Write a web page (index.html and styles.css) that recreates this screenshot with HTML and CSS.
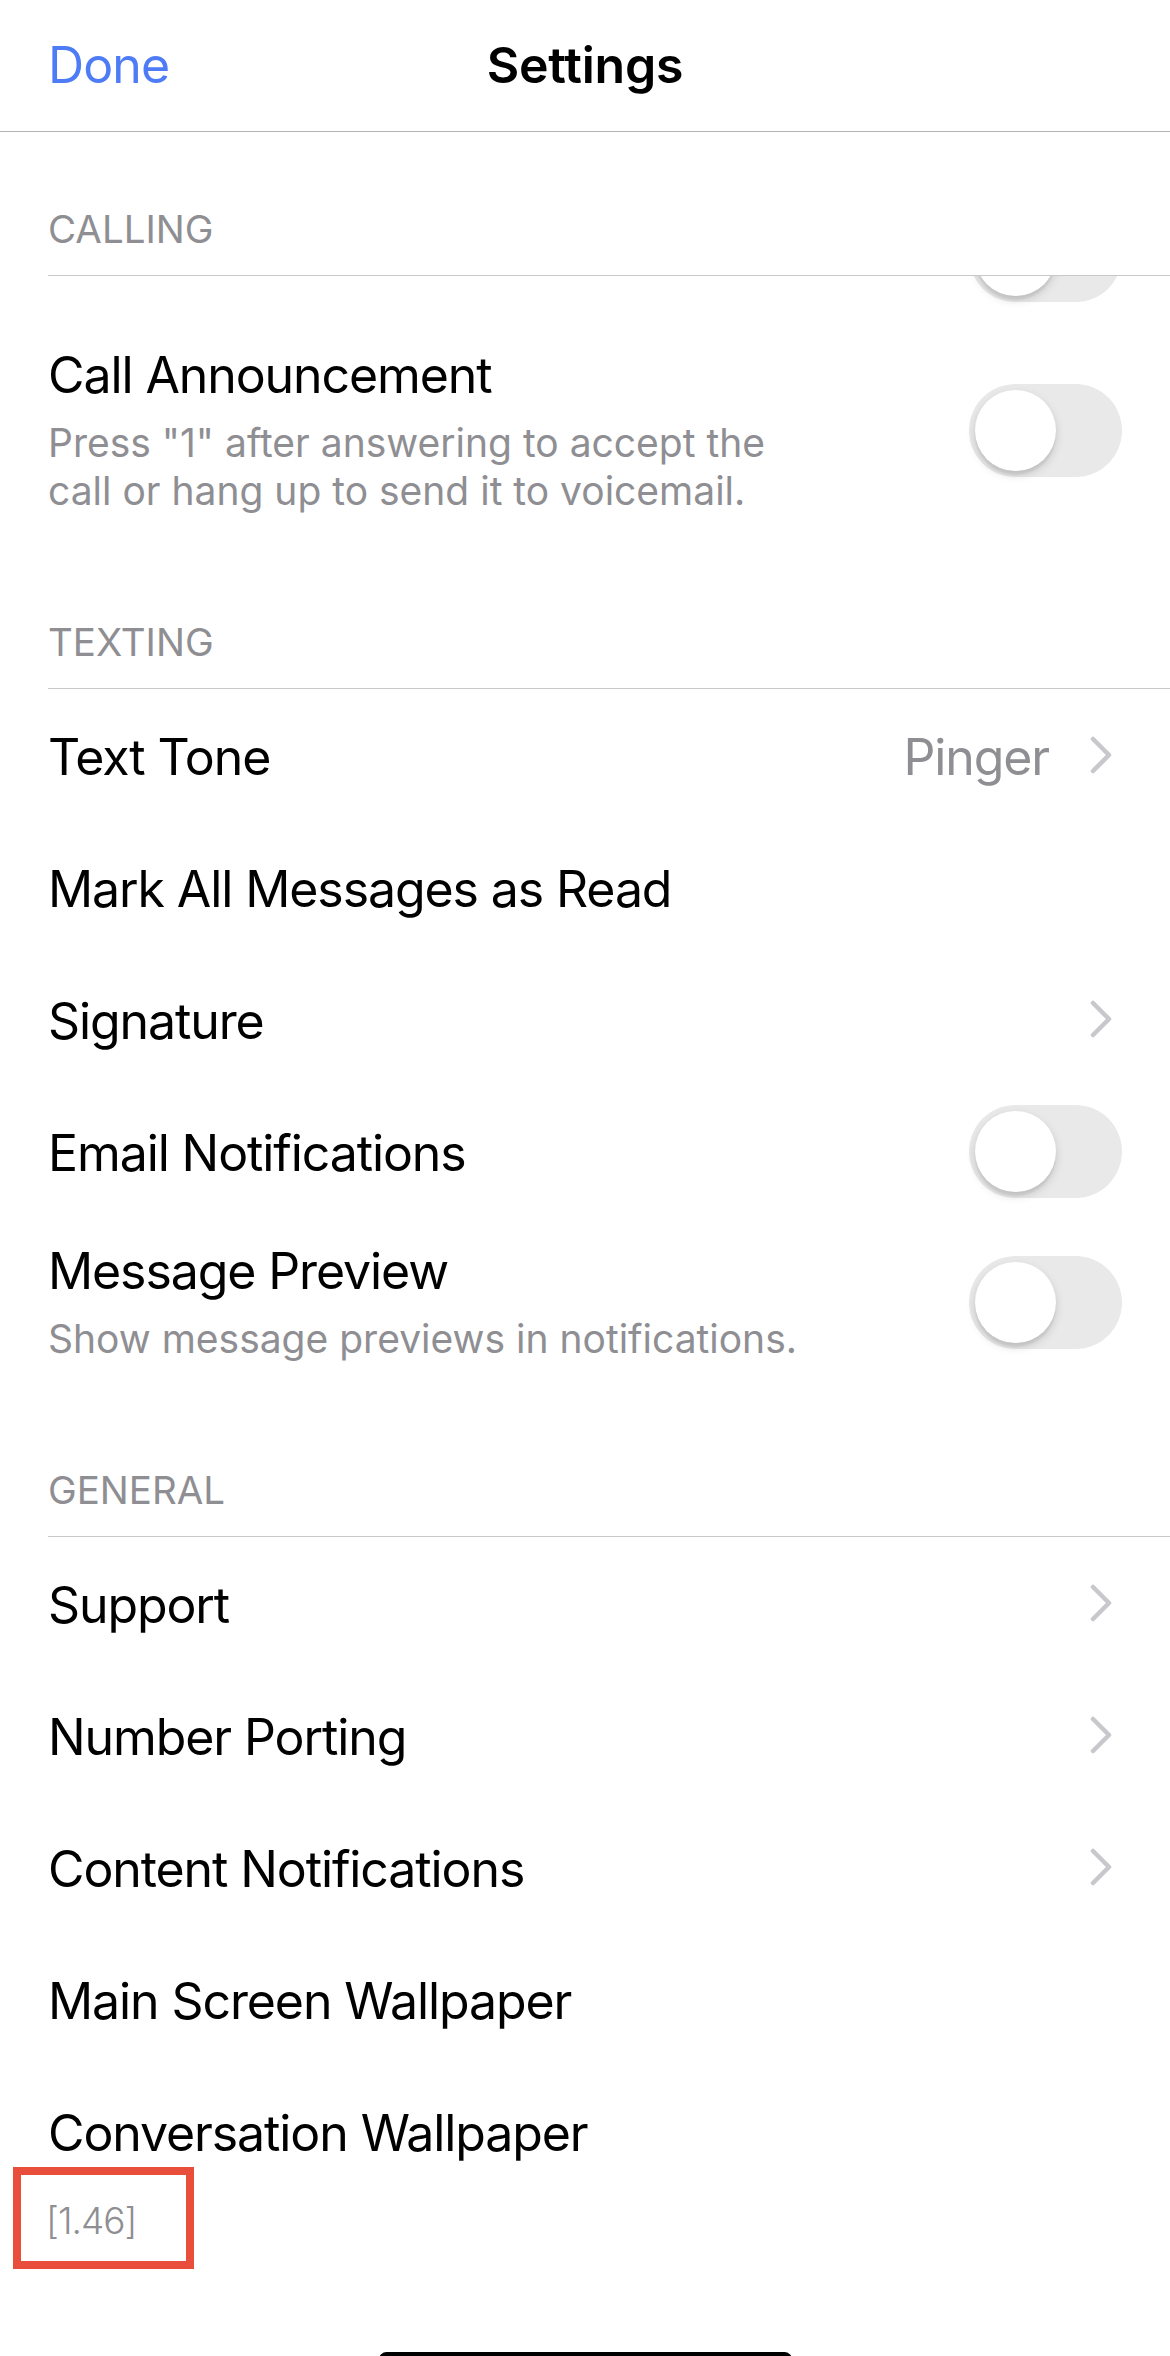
FILE: index.html
```html
<!DOCTYPE html>
<html lang="en">
<head>
<meta charset="utf-8">
<title>Settings</title>
<link rel="stylesheet" href="styles.css">
</head>
<body>
<header class="nav">
  <span class="nav-done">Done</span>
  <span class="nav-title">Settings</span>
  <span class="nav-spacer"></span>
</header>

<div class="section-head section-head--first">CALLING</div>
<div class="peek-row">
  <span class="switch switch--peek"><span class="knob"></span></span>
</div>
<div class="row row--two">
  <div class="row-text">
    <div class="row-title">Call Announcement</div>
    <div class="row-sub">Press "1" after answering to accept the call or hang up to send it to voicemail.</div>
  </div>
  <span class="switch"><span class="knob"></span></span>
</div>

<div class="section-head">TEXTING</div>
<div class="row">
  <span class="row-title">Text Tone</span>
  <span class="row-value">Pinger</span>
  <svg class="chevron" viewBox="0 0 22 38" width="22" height="38"><path d="M3 3 L19 19 L3 35"/></svg>
</div>
<div class="row">
  <span class="row-title">Mark All Messages as Read</span>
</div>
<div class="row">
  <span class="row-title">Signature</span>
  <svg class="chevron" viewBox="0 0 22 38" width="22" height="38"><path d="M3 3 L19 19 L3 35"/></svg>
</div>
<div class="row">
  <span class="row-title">Email Notifications</span>
  <span class="switch"><span class="knob"></span></span>
</div>
<div class="row row--two">
  <div class="row-text">
    <div class="row-title">Message Preview</div>
    <div class="row-sub">Show message previews in notifications.</div>
  </div>
  <span class="switch"><span class="knob"></span></span>
</div>

<div class="section-head">GENERAL</div>
<div class="row">
  <span class="row-title">Support</span>
  <svg class="chevron" viewBox="0 0 22 38" width="22" height="38"><path d="M3 3 L19 19 L3 35"/></svg>
</div>
<div class="row">
  <span class="row-title">Number Porting</span>
  <svg class="chevron" viewBox="0 0 22 38" width="22" height="38"><path d="M3 3 L19 19 L3 35"/></svg>
</div>
<div class="row">
  <span class="row-title">Content Notifications</span>
  <svg class="chevron" viewBox="0 0 22 38" width="22" height="38"><path d="M3 3 L19 19 L3 35"/></svg>
</div>
<div class="row">
  <span class="row-title">Main Screen Wallpaper</span>
</div>
<div class="row">
  <span class="row-title">Conversation Wallpaper</span>
</div>

<div class="version-badge">[1.46]</div>
<div class="home-bar"></div>
</body>
</html>
```

FILE: styles.css
```css
* { box-sizing: border-box; margin: 0; padding: 0; }
html, body { width: 1170px; height: 2356px; overflow: hidden; background: #fff; }
body {
  position: relative;
  font-family: Inter, "Liberation Sans", Arial, sans-serif;
  color: #000;
}

.nav {
  height: 132px;
  border-bottom: 1px solid #b2b2b2;
  display: grid;
  grid-template-columns: 1fr auto 1fr;
  align-items: center;
  padding: 0 48px;
  font-size: 50px;
  line-height: 61px;
}
.nav-done { color: #4e7bf6; letter-spacing: -0.9px; }
.nav-title { font-weight: 600; letter-spacing: -0.2px; color: #000; }

.section-head {
  height: 141px;
  margin-left: 48px;
  border-bottom: 1px solid #c8c7cc;
  display: flex;
  align-items: flex-end;
  padding-bottom: 23px;
  font-size: 38.5px;
  line-height: 46px;
  color: #8e8e93;
}
.section-head--first { height: 144px; }

.peek-row {
  height: 45px;
  overflow: hidden;
  display: flex;
  justify-content: flex-end;
  padding-right: 48px;
}
.switch--peek { margin-top: -67px; }

.row {
  height: 132px;
  display: flex;
  align-items: center;
  padding: 0 48px;
  font-size: 50px;
  line-height: 61px;
  letter-spacing: -1.1px;
}
.row-title { flex: 1; padding-top: 4px; }
.row-value { color: #8e8e93; padding-top: 4px; margin-right: 41px; }
.chevron {
  flex: none;
  fill: none;
  stroke: #c7c7cc;
  stroke-width: 4.5;
  stroke-linecap: round;
  stroke-linejoin: round;
  margin-right: 10px;
}

.row--two {
  height: auto;
  padding: 24px 48px 33px;
}
.row-text { flex: 1; }
.row--two .row-title { padding-top: 0; }
.row-sub {
  max-width: 750px;
  padding-top: 13px;
  font-size: 39px;
  line-height: 48px;
  letter-spacing: 0;
  color: #8e8e93;
}

.switch {
  flex: none;
  width: 153px;
  height: 93px;
  border-radius: 47px;
  background: #e9e9ea;
  padding: 6px;
  display: flex;
}
.knob {
  width: 81px;
  height: 81px;
  border-radius: 50%;
  background: #fff;
  box-shadow: 0 4px 10px rgba(0,0,0,0.15), 0 4px 2px rgba(0,0,0,0.06);
}

.version-badge {
  position: absolute;
  left: 13px;
  top: 2167px;
  width: 181px;
  height: 102px;
  border: 8px solid #e94e3d;
  padding: 23px 0 0 25px;
  font-size: 37px;
  font-weight: 300;
  line-height: 46px;
  letter-spacing: -1px;
  color: #8e8e93;
}
.home-bar {
  position: absolute;
  left: 379px;
  top: 2352px;
  width: 413px;
  height: 15px;
  border-radius: 8px;
  background: #000;
}
```
